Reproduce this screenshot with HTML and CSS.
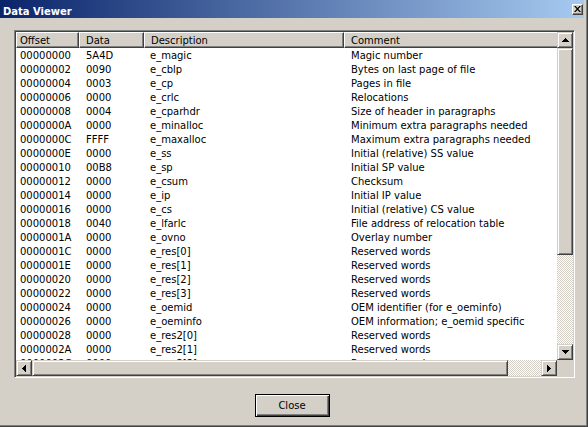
FILE: index.html
```html
<!DOCTYPE html>
<html>
<head>
<meta charset="utf-8">
<title>Data Viewer</title>
<link rel="stylesheet" href="styles.css">
</head>
<body>
<div class="window">
  <div class="frame">
    <div class="titlebar">
      <span class="title">Data Viewer</span>
      <div class="tb-close">
        <svg width="7" height="6" viewBox="0 0 7 6"><path d="M0 0h1.6L3.5 1.9 5.4 0H7L4.3 3 7 6H5.4L3.5 4.1 1.6 6H0l2.7-3z" fill="#000"/></svg>
      </div>
    </div>
    <div class="client">
      <div class="listbox">
        <div class="view">
          <div class="content">
            <div class="hdr">
              <div class="hcell c1">Offset</div>
              <div class="hcell c2">Data</div>
              <div class="hcell c3">Description</div>
              <div class="hcell c4">Comment</div>
            </div>
            <div class="rows">
              <div class="row"><span class="c1">00000000</span><span class="c2">5A4D</span><span class="c3">e_magic</span><span class="c4">Magic number</span></div>
              <div class="row"><span class="c1">00000002</span><span class="c2">0090</span><span class="c3">e_cblp</span><span class="c4">Bytes on last page of file</span></div>
              <div class="row"><span class="c1">00000004</span><span class="c2">0003</span><span class="c3">e_cp</span><span class="c4">Pages in file</span></div>
              <div class="row"><span class="c1">00000006</span><span class="c2">0000</span><span class="c3">e_crlc</span><span class="c4">Relocations</span></div>
              <div class="row"><span class="c1">00000008</span><span class="c2">0004</span><span class="c3">e_cparhdr</span><span class="c4">Size of header in paragraphs</span></div>
              <div class="row"><span class="c1">0000000A</span><span class="c2">0000</span><span class="c3">e_minalloc</span><span class="c4">Minimum extra paragraphs needed</span></div>
              <div class="row"><span class="c1">0000000C</span><span class="c2">FFFF</span><span class="c3">e_maxalloc</span><span class="c4">Maximum extra paragraphs needed</span></div>
              <div class="row"><span class="c1">0000000E</span><span class="c2">0000</span><span class="c3">e_ss</span><span class="c4">Initial (relative) SS value</span></div>
              <div class="row"><span class="c1">00000010</span><span class="c2">00B8</span><span class="c3">e_sp</span><span class="c4">Initial SP value</span></div>
              <div class="row"><span class="c1">00000012</span><span class="c2">0000</span><span class="c3">e_csum</span><span class="c4">Checksum</span></div>
              <div class="row"><span class="c1">00000014</span><span class="c2">0000</span><span class="c3">e_ip</span><span class="c4">Initial IP value</span></div>
              <div class="row"><span class="c1">00000016</span><span class="c2">0000</span><span class="c3">e_cs</span><span class="c4">Initial (relative) CS value</span></div>
              <div class="row"><span class="c1">00000018</span><span class="c2">0040</span><span class="c3">e_lfarlc</span><span class="c4">File address of relocation table</span></div>
              <div class="row"><span class="c1">0000001A</span><span class="c2">0000</span><span class="c3">e_ovno</span><span class="c4">Overlay number</span></div>
              <div class="row"><span class="c1">0000001C</span><span class="c2">0000</span><span class="c3">e_res[0]</span><span class="c4">Reserved words</span></div>
              <div class="row"><span class="c1">0000001E</span><span class="c2">0000</span><span class="c3">e_res[1]</span><span class="c4">Reserved words</span></div>
              <div class="row"><span class="c1">00000020</span><span class="c2">0000</span><span class="c3">e_res[2]</span><span class="c4">Reserved words</span></div>
              <div class="row"><span class="c1">00000022</span><span class="c2">0000</span><span class="c3">e_res[3]</span><span class="c4">Reserved words</span></div>
              <div class="row"><span class="c1">00000024</span><span class="c2">0000</span><span class="c3">e_oemid</span><span class="c4">OEM identifier (for e_oeminfo)</span></div>
              <div class="row"><span class="c1">00000026</span><span class="c2">0000</span><span class="c3">e_oeminfo</span><span class="c4">OEM information; e_oemid specific</span></div>
              <div class="row"><span class="c1">00000028</span><span class="c2">0000</span><span class="c3">e_res2[0]</span><span class="c4">Reserved words</span></div>
              <div class="row"><span class="c1">0000002A</span><span class="c2">0000</span><span class="c3">e_res2[1]</span><span class="c4">Reserved words</span></div>
              <div class="row"><span class="c1">0000002C</span><span class="c2">0000</span><span class="c3">e_res2[2]</span><span class="c4">Reserved words</span></div>
            </div>
          </div>
          <div class="vscroll">
            <div class="sb-btn"><svg width="7" height="4" viewBox="0 0 7 4"><path d="M3 0h1v1h-1zM2 1h3v1h-3zM1 2h5v1h-5zM0 3h7v1h-7z" fill="#000"/></svg></div>
            <div class="vthumb"></div>
            <div class="track"></div>
            <div class="sb-btn"><svg width="7" height="4" viewBox="0 0 7 4"><path d="M0 0h7v1h-7zM1 1h5v1h-5zM2 2h3v1h-3zM3 3h1v1h-1z" fill="#000"/></svg></div>
          </div>
        </div>
        <div class="hscroll">
          <div class="sb-btn"><svg width="4" height="7" viewBox="0 0 4 7"><path d="M0 3h1v1h-1zM1 2h1v3h-1zM2 1h1v5h-1zM3 0h1v7h-1z" fill="#000"/></svg></div>
          <div class="hthumb"></div>
          <div class="track"></div>
          <div class="sb-btn"><svg width="4" height="7" viewBox="0 0 4 7"><path d="M0 0h1v7h-1zM1 1h1v5h-1zM2 2h1v3h-1zM3 3h1v1h-1z" fill="#000"/></svg></div>
          <div class="corner"></div>
        </div>
      </div>
    </div>
    <div class="footer">
      <div class="btn-close">Close</div>
    </div>
  </div>
</div>
</body>
</html>
```
FILE: styles.css
```css
html, body {
  margin: 0;
  padding: 0;
}
body {
  background: #D4D0C8;
  font-family: "DejaVu Sans", "Liberation Sans", sans-serif;
  font-size: 10px;
  color: #000;
}
.window {
  width: 588px;
  height: 427px;
  box-sizing: border-box;
  border-right: 1px solid #404040;
  border-bottom: 1px solid #404040;
}
.frame {
  height: 100%;
  box-sizing: border-box;
  border-right: 1px solid #808080;
  border-bottom: 1px solid #808080;
  padding-right: 2px;
  display: flex;
  flex-direction: column;
}
.titlebar {
  height: 18px;
  flex: none;
  background: linear-gradient(to right, #0A246A, #A6CAF0);
  display: flex;
  align-items: flex-start;
  padding: 0 1px 0 3px;
}
.title {
  flex: 1;
  color: #fff;
  font-weight: bold;
  font-size: 10px;
  line-height: 15px;
  padding-top: 4px;
  white-space: nowrap;
}
.tb-close {
  width: 11px;
  height: 11px;
  margin-top: 4px;
  box-sizing: border-box;
  background: #D4D0C8;
  border: 1px solid;
  border-color: #fff #404040 #404040 #fff;
  box-shadow: inset -1px -1px #808080;
  display: flex;
  align-items: center;
  justify-content: center;
}
.tb-close svg {
  display: block;
  margin: 0 1px 1px 0;
}
.client {
  padding: 12px 9px 0 14px;
}
.listbox {
  height: 348px;
  box-sizing: border-box;
  border: 1px solid;
  border-color: #808080 #fff #fff #808080;
  box-shadow: inset 1px 1px #404040, inset -1px -1px #D4D0C8;
  padding: 1px;
  background: #fff;
  display: flex;
  flex-direction: column;
}
.view {
  height: 328px;
  display: flex;
}
.content {
  flex: 1;
  min-width: 0;
  overflow: hidden;
}
.hdr {
  display: flex;
  height: 16px;
  width: 564px;
}
.hcell {
  box-sizing: border-box;
  flex: none;
  height: 16px;
  line-height: 16px;
  background: #D4D0C8;
  border: 1px solid;
  border-color: #fff #404040 #404040 #fff;
  box-shadow: inset -1px -1px #808080;
  white-space: nowrap;
  overflow: hidden;
}
.rows {
  height: 312px;
  overflow: hidden;
}
.row {
  display: flex;
  height: 14px;
  line-height: 16px;
  white-space: nowrap;
  width: 564px;
}
.row span {
  display: block;
  flex: none;
  height: 14px;
  box-sizing: border-box;
  overflow: hidden;
}
.c1 { width: 63px; }
.c2 { width: 65px; }
.c3 { width: 200px; }
.c4 { width: 236px; }
.row .c1 { padding-left: 4px; }
.row .c2 { padding-left: 7px; }
.row .c3 { padding-left: 6px; }
.row .c4 { padding-left: 7px; }
.hcell.c1 { padding-left: 3px; }
.hcell.c2 { padding-left: 6px; }
.hcell.c3 { padding-left: 6px; }
.hcell.c4 { padding-left: 6px; }
.vscroll {
  width: 16px;
  flex: none;
  display: flex;
  flex-direction: column;
}
.hscroll {
  height: 16px;
  flex: none;
  display: flex;
}
.sb-btn, .vthumb, .hthumb {
  box-sizing: border-box;
  flex: none;
  background: #D4D0C8;
  border: 1px solid;
  border-color: #D4D0C8 #404040 #404040 #D4D0C8;
  box-shadow: inset 1px 1px #fff, inset -1px -1px #808080;
}
.sb-btn {
  width: 16px;
  height: 16px;
  display: flex;
  align-items: center;
  justify-content: center;
}
.sb-btn svg { display: block; }
.vthumb { height: 207px; }
.hthumb { width: 476px; height: 16px; }
.track {
  flex: 1;
  background-image: conic-gradient(#fff 25%, #D4D0C8 0 50%, #fff 0 75%, #D4D0C8 0);
  background-size: 2px 2px;
}
.corner {
  width: 16px;
  height: 16px;
  flex: none;
  background: #D4D0C8;
}
.footer {
  display: flex;
  justify-content: center;
  padding-top: 16px;
}
.btn-close {
  width: 75px;
  height: 23px;
  box-sizing: border-box;
  border: 1px solid #000;
  background: #D4D0C8;
  box-shadow: inset 1px 1px #fff, inset -1px -1px #404040, inset -2px -2px #808080;
  display: flex;
  align-items: center;
  justify-content: center;
  font-size: 10px;
}
```
